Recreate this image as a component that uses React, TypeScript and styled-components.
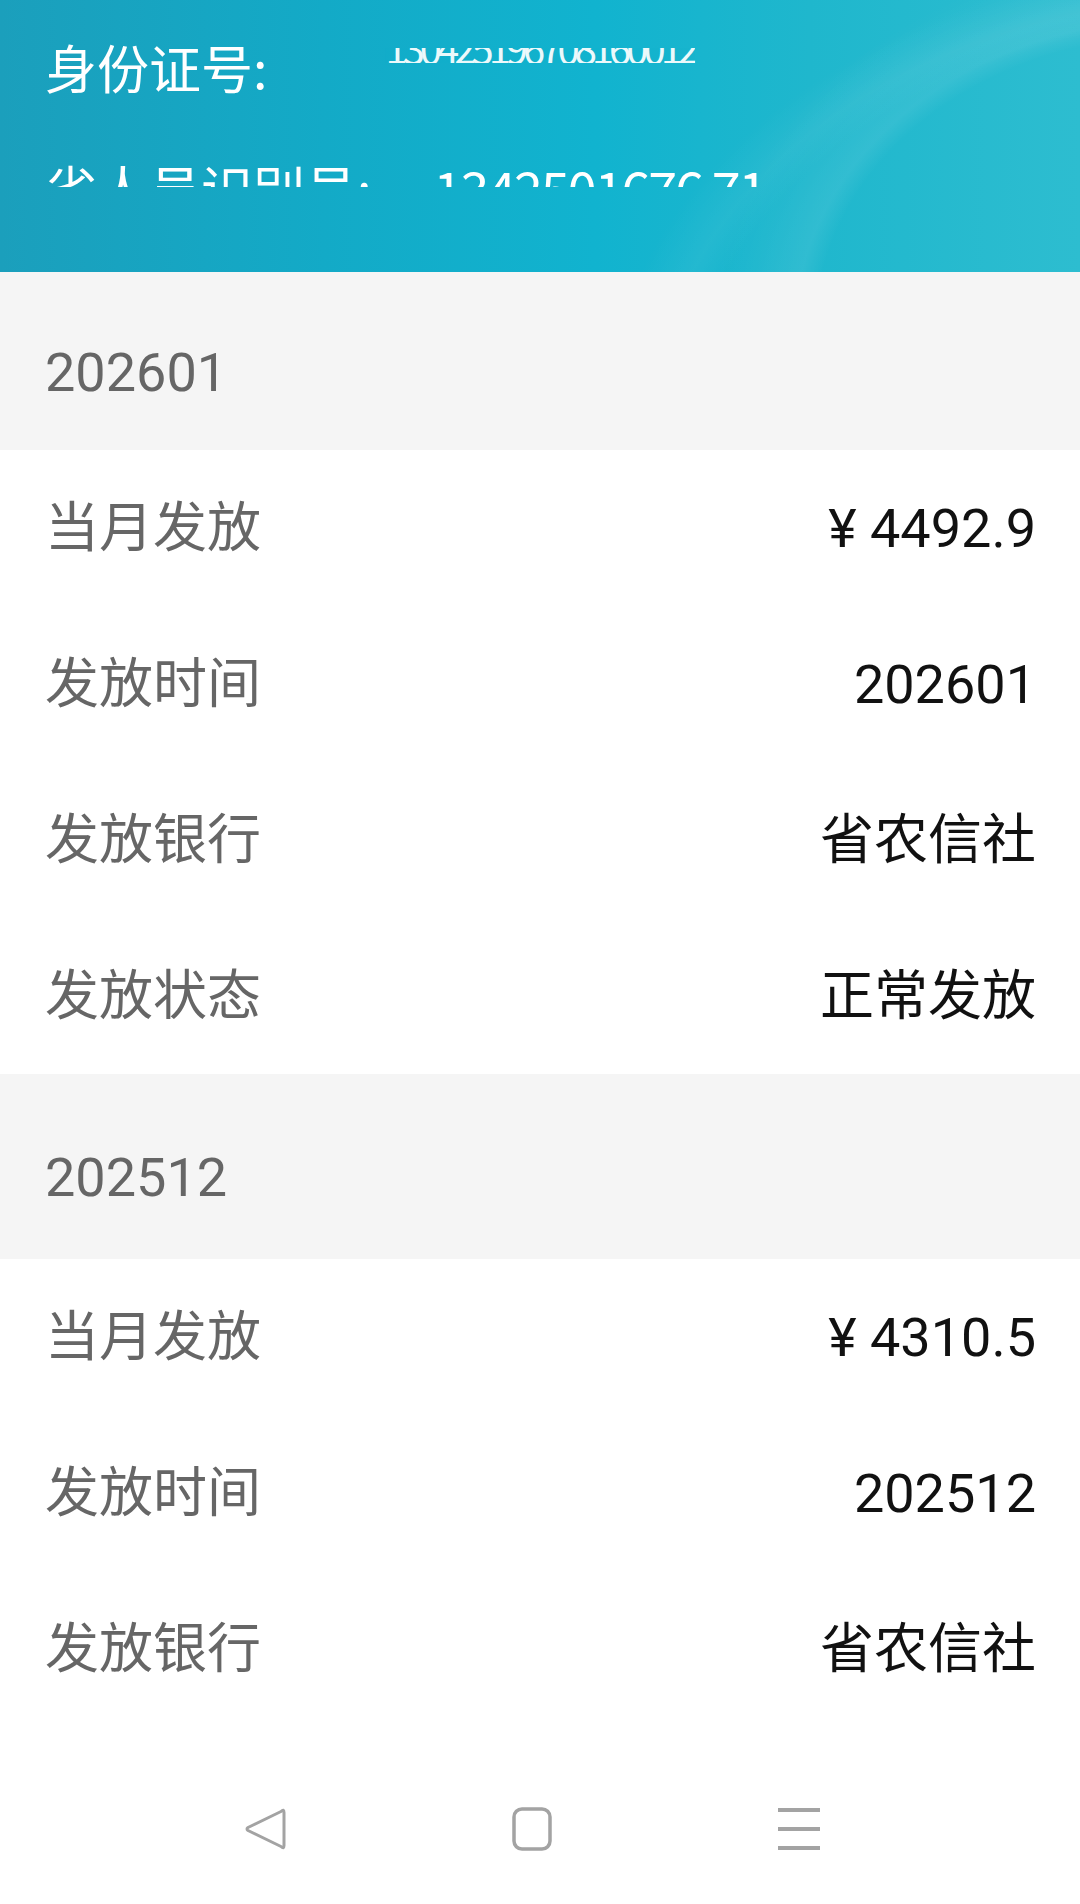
import React from "react";
import styled, { createGlobalStyle } from "styled-components";

const GlobalStyle = createGlobalStyle`
  html, body { margin: 0; padding: 0; background: #ffffff; }
  body { font-family: Roboto, "Noto Sans CJK SC", sans-serif; }
  * { box-sizing: border-box; }
`;

const Page = styled.div`
  width: 1080px;
  height: 1904px;
  display: flex;
  flex-direction: column;
  background: #ffffff;
  overflow: hidden;
`;

const Content = styled.main`
  flex: 1;
  min-height: 0;
  overflow: hidden;
  display: flex;
  flex-direction: column;
`;

const Header = styled.header`
  flex: none;
  height: 272px;
  padding: 35px 45px 0;
  display: flex;
  flex-direction: column;
  gap: 57px;
  color: #ffffff;
  background:
    radial-gradient(ellipse 520px 420px at 1180px 330px, rgba(255,255,255,0) 0 70%, rgba(255,255,255,0.08) 74%, rgba(255,255,255,0.03) 82%, rgba(255,255,255,0) 90%),
    radial-gradient(ellipse 700px 500px at 1250px 420px, rgba(255,255,255,0) 0 80%, rgba(255,255,255,0.05) 85%, rgba(255,255,255,0) 92%),
    linear-gradient(90deg, #1b9fbc 0%, #13aac7 30%, #11b3cf 55%, #1fb7cd 75%, #2dbdd0 100%);
`;

const HeaderLine = styled.div<{ $clipBottom?: number }>`
  height: 64px;
  display: flex;
  align-items: flex-start;
  font-family: "Noto Sans CJK SC", sans-serif;
  font-size: 52px;
  line-height: 64px;
  white-space: nowrap;
  clip-path: ${(p) => (p.$clipBottom ? `inset(0 0 ${p.$clipBottom}px 0)` : "none")};
`;

const HeaderLabel = styled.span``;

const IdMask = styled.span`
  margin-left: 118px;
  margin-top: -8px;
  height: 40px;
  font-family: "Noto Sans CJK SC", sans-serif;
  font-size: 40px;
  line-height: 40px;
  letter-spacing: -5px;
  opacity: 0.92;
  clip-path: inset(21px 0 4px 0);
`;

const HeaderNumber = styled.span`
  margin-left: 62px;
  letter-spacing: -2px;
`;

const SectionHeader = styled.div<{ $h: number }>`
  flex: none;
  height: ${(p) => p.$h}px;
  padding: 22px 45px 0;
  display: flex;
  align-items: center;
  background: #f5f5f5;
  color: #666666;
  font-size: 54px;
`;

const Row = styled.div`
  flex: none;
  height: 156px;
  padding: 0 44px 0 45px;
  display: flex;
  align-items: center;
  justify-content: space-between;
  background: #ffffff;
  font-size: 54px;
`;

const Label = styled.span`
  color: #666666;
  margin-bottom: 9px;
`;

const Value = styled.span<{ $cjk?: boolean }>`
  color: #111111;
  margin-bottom: ${(p) => (p.$cjk ? "9px" : "0")};
`;

const NavBar = styled.nav`
  flex: none;
  height: 150px;
  padding-right: 16px;
  background: #ffffff;
  display: flex;
  align-items: center;
  justify-content: center;
`;

const NavSlot = styled.div`
  width: 267px;
  display: flex;
  justify-content: center;
  align-items: center;
`;

type Rec = { month: string; amount: string; time: string; bank: string; status?: string; h: number };

const records: Rec[] = [
  { month: "202601", amount: "¥ 4492.9", time: "202601", bank: "省农信社", status: "正常发放", h: 178 },
  { month: "202512", amount: "¥ 4310.5", time: "202512", bank: "省农信社", h: 185 },
];

const BackIcon = () => (
  <svg width="44" height="44" viewBox="0 0 44 44" fill="none">
    <path
      d="M41 5.5 L41 38.5 Q41 42.5 38 39.5 L5 23.5 Q3 22 5 20.5 L38 4.5 Q41 1.5 41 5.5 Z"
      stroke="#a3a3a3"
      strokeWidth="3"
      strokeLinejoin="round"
    />
  </svg>
);

const HomeIcon = () => (
  <svg width="42" height="46" viewBox="0 0 42 46" fill="none">
    <rect x="3" y="3" width="36" height="40" rx="8" stroke="#a3a3a3" strokeWidth="3.5" />
  </svg>
);

const MenuIcon = () => (
  <svg width="44" height="46" viewBox="0 0 44 46" fill="none">
    <rect x="1" y="2" width="42" height="4" fill="#a3a3a3" />
    <rect x="1" y="21" width="42" height="4" fill="#a3a3a3" />
    <rect x="1" y="40" width="42" height="4" fill="#a3a3a3" />
  </svg>
);

const isCjk = (s: string) => /[\u4e00-\u9fff]/.test(s);

export default function App() {
  return (
    <>
      <GlobalStyle />
      <Page>
        <Content>
          <Header>
            <HeaderLine>
              <HeaderLabel>身份证号:</HeaderLabel>
              <IdMask>130425196708160012</IdMask>
            </HeaderLine>
            <HeaderLine $clipBottom={33}>
              <HeaderLabel>省人员识别号:</HeaderLabel>
              <HeaderNumber>1342501676 71</HeaderNumber>
            </HeaderLine>
          </Header>
          {records.map((r) => (
            <React.Fragment key={r.month}>
              <SectionHeader $h={r.h}>{r.month}</SectionHeader>
              <Row>
                <Label>当月发放</Label>
                <Value>{r.amount}</Value>
              </Row>
              <Row>
                <Label>发放时间</Label>
                <Value>{r.time}</Value>
              </Row>
              <Row>
                <Label>发放银行</Label>
                <Value $cjk={isCjk(r.bank)}>{r.bank}</Value>
              </Row>
              {r.status && (
                <Row>
                  <Label>发放状态</Label>
                  <Value $cjk={isCjk(r.status)}>{r.status}</Value>
                </Row>
              )}
            </React.Fragment>
          ))}
        </Content>
        <NavBar>
          <NavSlot>
            <BackIcon />
          </NavSlot>
          <NavSlot>
            <HomeIcon />
          </NavSlot>
          <NavSlot>
            <MenuIcon />
          </NavSlot>
        </NavBar>
      </Page>
    </>
  );
}
